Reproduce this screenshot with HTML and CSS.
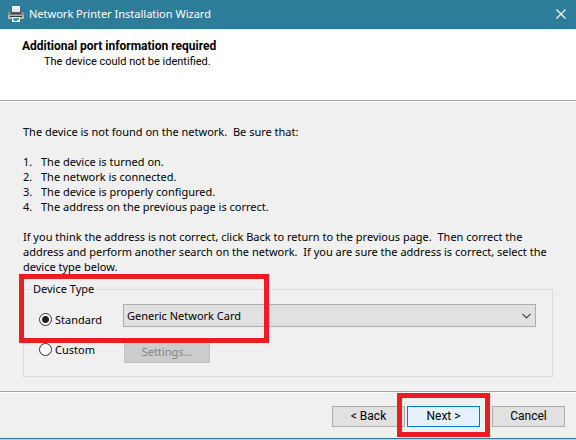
FILE: index.html
```html
<!DOCTYPE html>
<html lang="en">
<head>
<meta charset="utf-8">
<title>Network Printer Installation Wizard</title>
<link rel="stylesheet" href="styles.css">
</head>
<body>
<form class="wizard">
  <header class="titlebar">
    <svg class="printer" viewBox="0 0 16 16" aria-hidden="true">
      <path d="M4 0h8v7H4z" fill="#f7f5f5"/>
      <path d="M1 6h2v1h10V6h2l1 3v4H0V9z" fill="#b5b5b7"/>
      <path d="M2 5h12l1 4H1z" fill="#77787c"/>
      <path d="M3 5h10v3H3z" fill="#505156"/>
      <path d="M4 3h8v3H4z" fill="#e6e6e8"/>
      <path d="M2 10h12v1H2z" fill="#35373b"/>
      <path d="M14 9h1v1h-1z" fill="#6fc16b"/>
      <path d="M4 11h8v5H4z" fill="#f4f6f7"/>
      <path d="M5 12h3v2H5z" fill="#39a3d8"/>
      <path d="M8 12h3v2H8z" fill="#4c9b70"/>
      <path d="M6 14h3v1H6z" fill="#2e6b9c"/>
    </svg>
    <h1 class="title">Network Printer Installation Wizard</h1>
    <button class="close" type="button" aria-label="Close">
      <svg viewBox="0 0 10 10" aria-hidden="true"><path d="M0.5 0.5l9 9M9.500 0.500l-9 9" fill="none" stroke="#fff" stroke-width="1.2"/></svg>
    </button>
  </header>
  <section class="heading">
    <h2 class="heading-title">Additional port information required</h2>
    <p class="heading-sub">The device could not be identified.</p>
  </section>
  <main class="content">
    <p>The device is not found on the network.&nbsp; Be sure that:</p>
    <ol class="checks">
      <li>The device is turned on.</li>
      <li>The network is connected.</li>
      <li>The device is properly configured.</li>
      <li>The address on the previous page is correct.</li>
    </ol>
    <p>If you think the address is not correct, click Back to return to the previous page.&nbsp; Then correct the<br>address and perform another search on the network.&nbsp; If you are sure the address is correct, select the<br>device type below.</p>
    <div class="device">
      <fieldset class="group">
        <legend>Device Type</legend>
        <div class="options">
          <label class="option option-standard"><input type="radio" name="type" checked>Standard</label>
          <div class="combo">
            <select class="select" aria-label="Standard device type"><option>Generic Network Card</option></select>
            <svg class="chevron" viewBox="0 0 9 6" aria-hidden="true"><path d="M0.500 0.800l4 4 4-4" fill="none" stroke="#444" stroke-width="1.200"/></svg>
          </div>
          <label class="option option-custom"><input type="radio" name="type">Custom</label>
          <button class="button settings" type="button" disabled>Settings...</button>
        </div>
      </fieldset>
      <div class="mark mark-device"></div>
    </div>
  </main>
  <footer class="actions">
    <button class="button" type="button">&lt; Back</button>
    <div class="next">
      <div class="mark mark-next"></div>
      <button class="button primary" type="button">Next &gt;</button>
    </div>
    <button class="button" type="button">Cancel</button>
  </footer>
</form>
</body>
</html>
```
FILE: styles.css
```css
* {
  box-sizing: border-box;
}

body {
  margin: 0;
  background: #c3ccd0;
  color: #000;
  font: 11px/15px "Noto Sans", "Open Sans", sans-serif;
}

h1,
h2,
p,
ol,
fieldset {
  margin: 0;
  padding: 0;
}

button,
select {
  font: inherit;
  color: inherit;
}

.wizard {
  background: #f0f0f0;
  border-bottom: 1px solid #2d7d9a;
}

.titlebar {
  display: flex;
  align-items: center;
  height: 29px;
  padding: 0 10px 2px 8px;
  background: #2d7d9a;
  color: #fff;
}

.printer {
  width: 16px;
  height: 16px;
}

.title {
  flex: 1;
  margin-left: 5px;
  font-size: 11px;
  font-weight: 400;
}

.close {
  display: flex;
  padding: 0;
  border: 0;
  background: none;
}

.close svg {
  width: 10px;
  height: 10px;
}

.heading {
  height: 72px;
  padding: 10px 22px;
  background: #fff;
  border-bottom: 1px solid #a0a0a0;
  font-family: Roboto, "Liberation Sans", sans-serif;
}

.heading-title {
  font-size: 12px;
  line-height: 15px;
}

.heading-sub {
  padding-left: 22px;
}

.content {
  padding: 22px 23px 14px;
  border-top: 1px solid #fff;
}

.checks {
  margin: 15px 0;
  list-style: none;
  counter-reset: check;
}

.checks li {
  display: flex;
  counter-increment: check;
}

.checks li::before {
  content: counter(check) ".";
  width: 18px;
}

.device {
  position: relative;
  margin-top: 7px;
}

.group {
  min-width: 0;
  padding: 0 16px 13px 15px;
  border: 1px solid #dcdcdc;
}

.group legend {
  margin-left: -8px;
  padding: 0 2px;
  line-height: 16px;
}

.options {
  display: grid;
  grid-template-columns: 84px 1fr;
  row-gap: 13px;
  padding-top: 7px;
}

.option {
  display: flex;
  align-items: center;
  gap: 3px;
  height: 23px;
}

.option-standard {
  padding-top: 8px;
}

.option-custom {
  padding-bottom: 4px;
}

.option input {
  appearance: none;
  width: 13px;
  height: 13px;
  margin: 0;
  border: 1px solid #333;
  border-radius: 50%;
  background: #fff;
}

.option input:checked {
  background: radial-gradient(circle, #222 3px, #fff 4px);
}

.combo {
  position: relative;
}

.select {
  display: block;
  appearance: none;
  width: 100%;
  height: 23px;
  padding: 0 20px 0 3px;
  border: 1px solid #adadad;
  border-radius: 0;
  background: #e1e1e1;
}

.chevron {
  position: absolute;
  top: 9px;
  right: 5px;
  width: 9px;
  height: 6px;
  pointer-events: none;
}

.button {
  width: 73px;
  height: 21px;
  padding: 0;
  border: 1px solid #adadad;
  background: #e1e1e1;
  font-family: Roboto, "Liberation Sans", sans-serif;
  font-size: 12px;
}

.settings {
  width: 86px;
  height: 23px;
  margin-left: 1px;
  border-color: #bfbfbf;
  background: #ccc;
  color: #838383;
  font: inherit;
}

.actions {
  display: flex;
  justify-content: flex-end;
  padding: 14px 11px 11px;
  border-top: 1px solid #a0a0a0;
  box-shadow: inset 0 1px #fff;
}

.next {
  position: relative;
  display: flex;
  margin: 0 12px 0 2px;
}

.primary {
  position: relative;
  border-color: #0078d7;
  background: #e5f1fb;
}

.mark {
  position: absolute;
  border: 5px solid #ed1c24;
  pointer-events: none;
}

.mark-device {
  top: -7px;
  left: -4px;
  width: 250px;
  height: 69px;
}

.mark-next {
  inset: -13px -10px -10px;
}
```
